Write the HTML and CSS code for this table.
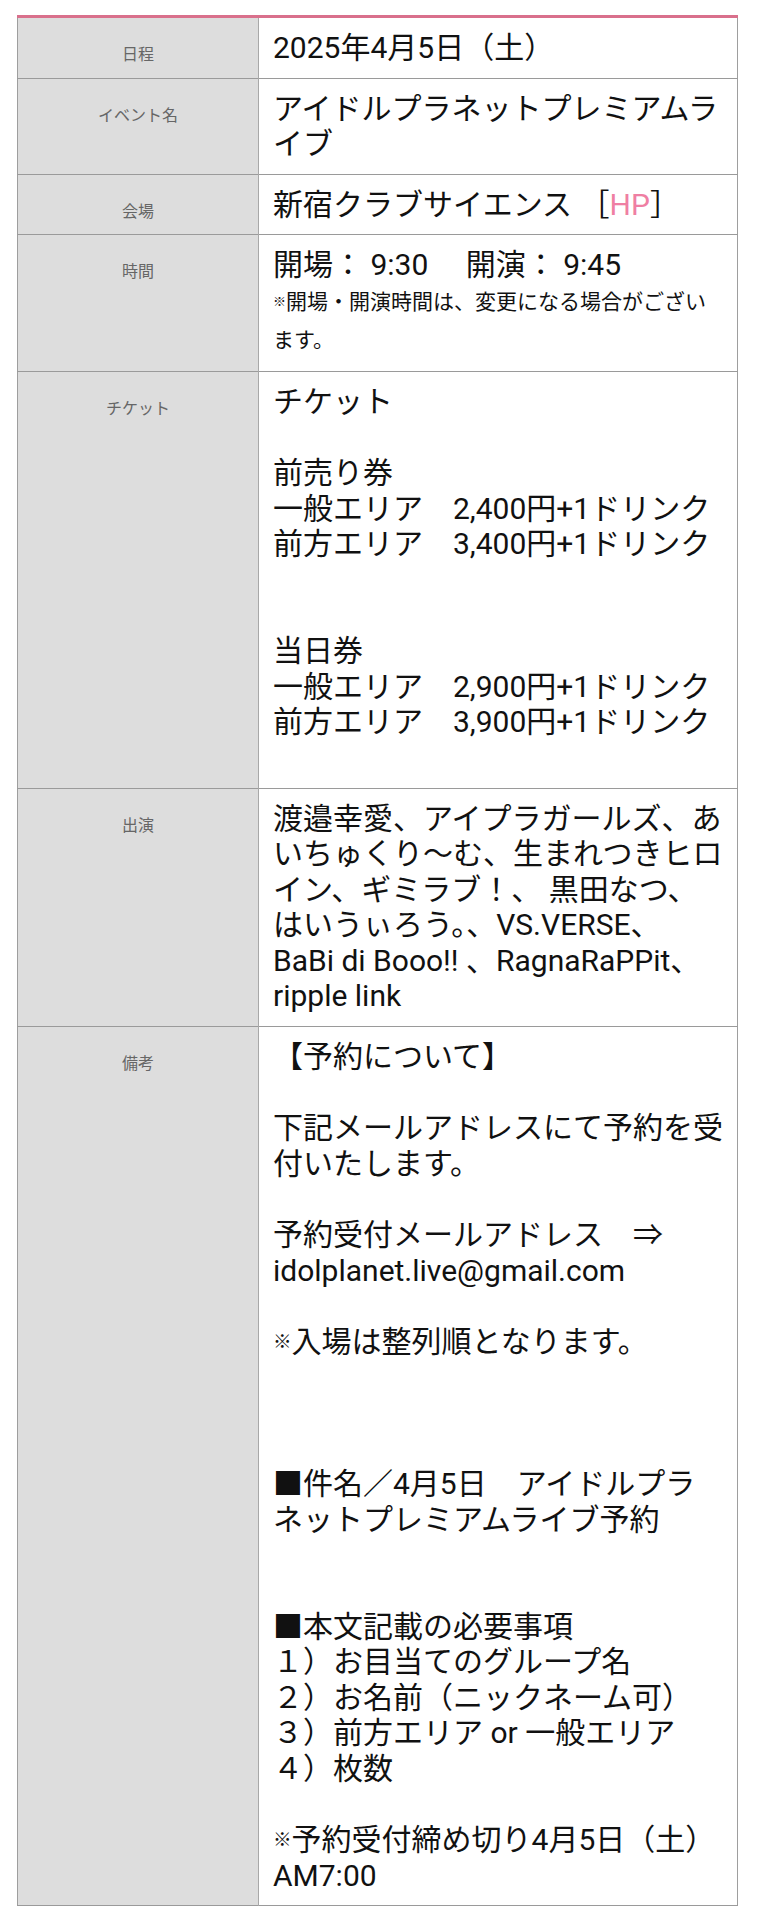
FILE: index.html
```html
<!DOCTYPE html>
<html lang="ja">
<head>
<meta charset="utf-8">
<title>アイドルプラネットプレミアムライブ</title>
<link rel="stylesheet" href="styles.css">
</head>
<body>
<div class="page">
  <table class="info">
    <tbody>
      <tr>
        <th class="label">日程</th>
        <td class="value">2025年4月5日（土）</td>
      </tr>
      <tr>
        <th class="label">イベント名</th>
        <td class="value">アイドルプラネットプレミアムラ<br>イブ</td>
      </tr>
      <tr>
        <th class="label">会場</th>
        <td class="value">新宿クラブサイエンス ［<a class="link" href="#">HP</a>］</td>
      </tr>
      <tr>
        <th class="label">時間</th>
        <td class="value">開場： 9:30　 開演： 9:45
          <div class="note"><span class="mark">※</span>開場・開演時間は、変更になる場合がござい<br>ます。</div>
        </td>
      </tr>
      <tr>
        <th class="label">チケット</th>
        <td class="value">チケット<br><br>前売り券<br>一般エリア　2,400円+1ドリンク<br>前方エリア　3,400円+1ドリンク<br><br><br>当日券<br>一般エリア　2,900円+1ドリンク<br>前方エリア　3,900円+1ドリンク<br><br></td>
      </tr>
      <tr>
        <th class="label">出演</th>
        <td class="value">渡邉幸愛、アイプラガールズ、あ<br>いちゅくり～む、生まれつきヒロ<br>イン、ギミラブ！、 黒田なつ、<br>はいうぃろう。、VS.VERSE、<br>BaBi di Booo!! 、RagnaRaPPit、<br>ripple link</td>
      </tr>
      <tr>
        <th class="label">備考</th>
        <td class="value">【予約について】<br><br>下記メールアドレスにて予約を受<br>付いたします。<br><br>予約受付メールアドレス　⇒<br>idolplanet.live@gmail.com<br><br><span class="mark">※</span>入場は整列順となります。<br><br><br><br>■件名／4月5日　アイドルプラ<br>ネットプレミアムライブ予約<br><br><br>■本文記載の必要事項<br>１）お目当てのグループ名<br>２）お名前（ニックネーム可）<br>３）前方エリア or 一般エリア<br>４）枚数<br><br><span class="mark">※</span>予約受付締め切り4月5日（土）<br>AM7:00</td>
      </tr>
    </tbody>
  </table>
</div>
</body>
</html>
```

FILE: styles.css
```css
html, body {
  margin: 0;
  padding: 0;
  background: #ffffff;
}

.page {
  padding: 15px 21px 12px 17px;
}

.info {
  width: 100%;
  border-collapse: collapse;
  table-layout: fixed;
  border-top: 3px solid #d9708c;
  border-left: 1px solid #9e9e9e;
  border-right: 1px solid #9e9e9e;
}

.info tr {
  border-bottom: 1px solid #9a9a9a;
}

.label {
  width: 241px;
  box-sizing: border-box;
  background: #dddddd;
  color: #666666;
  font-family: "Noto Sans CJK JP", sans-serif;
  font-weight: 400;
  font-size: 16px;
  line-height: 26px;
  text-align: center;
  vertical-align: top;
  padding: 22px 8px 8px;
  border-right: 1px solid #a8a8a8;
}

.value {
  color: #111111;
  font-family: Roboto, "Noto Sans CJK JP", sans-serif;
  font-size: 30px;
  line-height: 35.6px;
  vertical-align: top;
  padding: 12px 10px 12px 14px;
  text-align: left;
}

.link {
  color: #ef7fa3;
  text-decoration: none;
}

.note {
  font-size: 21px;
  line-height: 38px;
}

.mark {
  font-size: 0.62em;
  line-height: 0;
  vertical-align: 0.22em;
}
```
